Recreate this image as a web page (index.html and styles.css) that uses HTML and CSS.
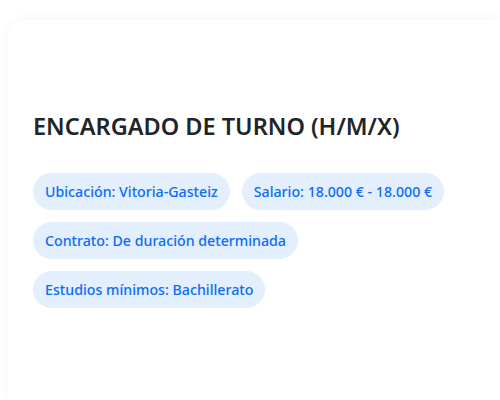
FILE: index.html
```html
<!DOCTYPE html>
<html lang="es">
<head>
    <meta charset="UTF-8">
    <meta name="viewport" content="width=device-width, initial-scale=1.0">
    <title>Encargado de turno (H/M/X)</title>
    <link rel="stylesheet" href="styles.css">
</head>
<body>

    <!-- Ficha de la oferta -->
    <div class="offer-card">
        <div class="offer-logo"></div>

        <h1 class="offer-title">ENCARGADO DE TURNO (H/M/X)</h1>

        <div class="offer-tags">
            <span class="tag">Ubicación: Vitoria-Gasteiz</span>
            <span class="tag">Salario: 18.000 € - 18.000 €</span>
            <span class="tag">Contrato: De duración determinada</span>
            <span class="tag">Estudios mínimos: Bachillerato</span>
        </div>
    </div>

</body>
</html>
```

FILE: styles.css
```css
html, body {
    height: 100%;
}

body {
    margin: 0;
    padding: 20px 0 0 8px;
    box-sizing: border-box;
    font-family: 'Noto Sans', 'Open Sans', sans-serif;
    background-color: #fff;
    overflow: hidden;
}

.offer-card {
    box-sizing: border-box;
    height: 100%;
    padding: 0 25px;
    background-color: #fff;
    border-radius: 16px 0 0 0; /* la tarjeta sigue por la derecha */
    box-shadow: 0 0 12px rgba(0, 0, 0, 0.05);
}

.offer-logo {
    height: 88px; /* hueco para el logo de la empresa */
}

.offer-title {
    margin: 0 0 29px;
    font-size: 23.5px;
    line-height: 36px;
    font-weight: 600;
    color: #212529;
}

.offer-tags {
    display: flex;
    flex-wrap: wrap;
    gap: 12px;
    max-width: 430px;
}

.tag {
    display: inline-block;
    padding: 10px 12px;
    font-size: 14.2px;
    line-height: 17px;
    font-weight: 500;
    color: #0b6cfb;
    background-color: #e3effd;
    border-radius: 20px;
}
```
